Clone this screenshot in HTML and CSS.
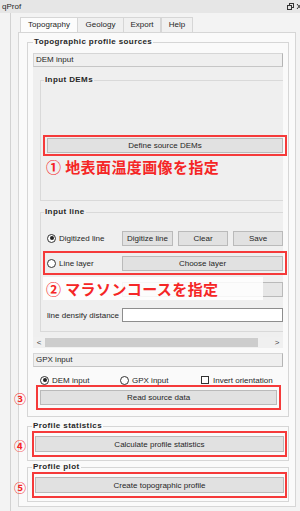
FILE: index.html
```html
<!DOCTYPE html>
<html lang="ja">
<head>
  <meta charset="UTF-8">
  <title>qProf</title>
  <link rel="stylesheet" href="styles.css">
</head>
<body>
  <div class="titlebar">
    <span class="title">qProf</span>
    <svg class="tb-icons" width="13" height="9" viewBox="0 0 13 9">
      <rect x="2.5" y="1.5" width="4" height="4" fill="none" stroke="#333" stroke-width="1"/>
      <rect x="0.5" y="3.5" width="4" height="4" fill="#e4e4e4" stroke="#333" stroke-width="1"/>
      <path d="M10 2 L14 7 M14 2 L10 7" stroke="#333" stroke-width="1"/>
    </svg>
  </div>

  <div class="dock-body">
    <div class="tabbar">
      <div class="tab tab-topo active">Topography</div>
      <div class="tab tab-geo">Geology</div>
      <div class="tab tab-exp">Export</div>
      <div class="tab tab-help">Help</div>
    </div>

    <div class="pane">
      <fieldset class="group main">
        <legend>Topographic profile sources</legend>

        <div class="section-head">DEM input</div>
        <div class="scroll">
          <div class="scroll-view">
            <fieldset class="group sub dems">
              <legend>Input DEMs</legend>
              <div class="mark mark-dem">
                <button class="btn wide">Define source DEMs</button>
              </div>
              <div class="note">① 地表面温度画像を指定</div>
            </fieldset>

            <fieldset class="group sub line">
              <legend>Input line</legend>
              <div class="row">
                <label class="opt"><span class="radio on"></span>Digitized line</label>
                <div class="btns">
                  <button class="btn b-dig">Digitize line</button>
                  <button class="btn b-sm">Clear</button>
                  <button class="btn b-sm">Save</button>
                </div>
              </div>
              <div class="mark mark-layer">
                <div class="row">
                  <label class="opt"><span class="radio"></span>Line layer</label>
                  <button class="btn grow">Choose layer</button>
                </div>
              </div>
              <div class="row row-points">
                <span class="opt off"><span class="radio"></span></span>
                <span class="btn grow off"></span>
                <div class="note note-over">② マラソンコースを指定</div>
              </div>
              <div class="row row-dist">
                <label class="opt">line densify distance</label>
                <div class="field"></div>
              </div>
            </fieldset>
          </div>
          <div class="hscroll">
            <span class="arrow">&lt;</span>
            <span class="thumb"></span>
            <span class="arrow arrow-r">&gt;</span>
          </div>
        </div>

        <div class="section-head gpx">GPX input</div>
        <div class="row row-src">
          <label class="opt o-dem"><span class="radio on"></span>DEM input</label>
          <label class="opt o-gpx"><span class="radio"></span>GPX input</label>
          <label class="opt"><span class="check"></span>Invert orientation</label>
        </div>
        <div class="mark mark-read">
          <span class="num">③</span>
          <button class="btn wide">Read source data</button>
        </div>
      </fieldset>

      <fieldset class="group small">
        <legend>Profile statistics</legend>
        <div class="mark mark-small">
          <span class="num">④</span>
          <button class="btn wide tall">Calculate profile statistics</button>
        </div>
      </fieldset>

      <fieldset class="group small plot">
        <legend>Profile plot</legend>
        <div class="mark mark-small">
          <span class="num">⑤</span>
          <button class="btn wide tall">Create topographic profile</button>
        </div>
      </fieldset>
    </div>
  </div>
</body>
</html>
```

FILE: styles.css
```css
* {
  box-sizing: border-box;
  margin: 0;
  padding: 0;
}

html, body {
  width: 300px;
  height: 511px;
  overflow: hidden;
}

body {
  background: #f3f3f3;
  font-family: 'Liberation Sans', Arial, sans-serif;
  font-size: 8px;
  color: #262626;
}

.titlebar {
  height: 13px;
  background: #e6e6e6;
  display: flex;
  align-items: center;
  justify-content: space-between;
  padding-left: 2px;
}

.tb-icons {
  display: block;
}

.dock-body {
  margin-left: 10px;
  border-left: 1px solid #d2d2d2;
  padding: 4px 4px 0 7px;
  height: 498px;
}

/* tabs */
.tabbar {
  display: flex;
  height: 15px;
  margin-left: 2px;
}

.tab {
  border: 1px solid #d6d6d6;
  border-bottom: none;
  background: #f0f0f0;
  line-height: 14px;
  text-align: center;
  margin-right: -1px;
}

.tab.active {
  background: #fcfcfc;
}

.tab-topo { width: 58px; }
.tab-geo { width: 47px; }
.tab-exp { width: 38px; }
.tab-help { width: 32px; margin-left: 1px; }

.pane {
  height: 475px;
  border: 1px solid #d6d6d6;
  background: #fafafa;
  padding: 4px 6px 0 8px;
}

/* group boxes */
.group {
  border: 1px solid #d6d6d6;
  min-width: 0;
}

.group > legend {
  font-weight: bold;
  line-height: 10px;
  padding: 0 1px;
  letter-spacing: 0.4px;
}

.main {
  padding: 6px 5px 6px 5px;
}

.section-head {
  height: 14px;
  line-height: 12px;
  padding-left: 2px;
  background: #efefef;
  border: 1px solid #d6d6d6;
  border-right-color: #b4b4b4;
  border-bottom-color: #c6c6c6;
}

.scroll {
  background: #efefef;
}

.scroll-view {
  height: 270px;
  padding: 8px 0 0 7px;
}

.sub {
  border-right: none;
  border-color: #d9d9d9;
  padding-left: 6px;
}

.sub > legend {
  margin-left: -3px;
}

.dems {
  padding-top: 50px;
  padding-bottom: 25px;
}

.line {
  margin-top: 6px;
  padding-top: 13px;
  padding-bottom: 8px;
}

.row {
  display: flex;
  align-items: center;
  height: 16px;
}

.opt {
  display: flex;
  align-items: center;
  width: 75px;
  flex-shrink: 0;
}

.radio {
  width: 9px;
  height: 9px;
  border: 1px solid #333;
  border-radius: 50%;
  background: #fff;
  margin-right: 3px;
  position: relative;
}

.radio.on::after {
  content: "";
  position: absolute;
  left: 1.5px;
  top: 1.5px;
  width: 4px;
  height: 4px;
  border-radius: 50%;
  background: #222;
}

.opt.off .radio {
  border-color: #bcbcbc;
}

.check {
  width: 8px;
  height: 8px;
  border: 1px solid #333;
  background: #fff;
  margin-right: 4px;
}

.btns {
  display: flex;
  gap: 5px;
  flex: 1;
}

.btn {
  height: 15px;
  background: #e1e1e1;
  border: 1px solid #bababa;
  font-family: inherit;
  font-size: 8px;
  color: #262626;
}

.btn.off {
  background: #e6e6e6;
}

.b-dig { width: 51px; }
.b-sm { width: 50px; }
.grow { flex: 1; }
.wide { display: block; width: 100%; }
.tall { height: 16px; }

/* red annotation frames */
.mark {
  position: relative;
  border: 2px solid #f53a3a;
}

.mark-dem {
  margin: 0 -4px;
  padding: 1px 2px;
}

.mark-layer {
  margin: 5px -4px 0;
  padding: 2px;
}

.mark-read {
  margin: 0 2px 0 3px;
  padding: 3px 2px;
}

.mark-small {
  padding: 3px 1px;
}

.note {
  font-family: 'Noto Sans CJK JP', sans-serif;
  font-weight: bold;
  font-size: 15px;
  line-height: 17px;
  color: #f52626;
  margin: 2px 0 0 -1px;
  letter-spacing: 0.4px;
  white-space: nowrap;
}

.row-points {
  position: relative;
  margin-top: 6px;
}

.note-over {
  position: absolute;
  left: -4px;
  top: -4px;
  width: 220px;
  height: 23px;
  line-height: 23px;
  margin: 0;
  padding-left: 3px;
  background: rgba(255, 255, 255, 0.85);
}

.row-dist {
  margin-top: 10px;
}

.field {
  flex: 1;
  height: 14px;
  background: #fff;
  border: 1px solid #8d8d8d;
}

.hscroll {
  display: flex;
  align-items: center;
  height: 11px;
  background: #f0f0f0;
}

.arrow {
  width: 12px;
  text-align: center;
  font-size: 8px;
  color: #444;
}

.thumb {
  width: 213px;
  height: 9px;
  background: #cdcdcd;
}

.arrow-r {
  margin-left: auto;
}

.gpx {
  margin-top: 5px;
}

.row-src {
  height: 10px;
  margin-top: 8px;
  padding-left: 7px;
}

.o-dem { width: 80px; }
.o-gpx { width: 81px; }

.num {
  position: absolute;
  font-family: 'Noto Sans CJK JP', sans-serif;
  font-weight: bold;
  font-size: 12px;
  line-height: 13px;
  color: #f52626;
  left: -20px;
  top: 6px;
}

.mark-read .num {
  left: -24px;
  top: 5px;
}

.small {
  margin-top: 4px;
  padding: 0 1px 3px 4px;
}

.plot {
  margin-top: 1px;
}

.plot .num {
  top: 7px;
}
```
